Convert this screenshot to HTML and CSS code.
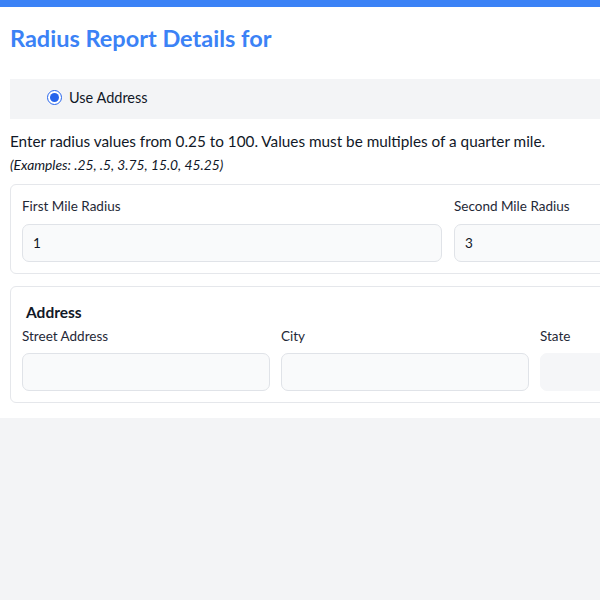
FILE: index.html
```html
<!DOCTYPE html>
<html lang="en">

<head>
    <meta charset="UTF-8">
    <meta name="viewport" content="width=device-width, initial-scale=1.0">
    <title>Radius Report</title>
    <link rel="stylesheet" href="styles.css">
</head>

<body>
    <div class="topbar"></div>
    <div class="page">
        <h1 class="title">Radius Report Details for</h1>

        <!-- 选择方式 -->
        <div class="mode">
            <label class="radio">
                <input type="radio" name="mode" checked>
                <span>Use Address</span>
            </label>
        </div>

        <p class="hint">Enter radius values from 0.25 to 100. Values must be multiples of a quarter mile.</p>
        <p class="examples">(Examples: .25, .5, 3.75, 15.0, 45.25)</p>

        <!-- 半径 -->
        <div class="card radius">
            <div class="field">
                <label>First Mile Radius</label>
                <input type="text" value="1">
            </div>
            <div class="field">
                <label>Second Mile Radius</label>
                <input type="text" value="3">
            </div>
        </div>

        <!-- 地址 -->
        <div class="card address">
            <h2 class="card-title">Address</h2>
            <div class="row">
                <div class="field">
                    <label>Street Address</label>
                    <input type="text">
                </div>
                <div class="field">
                    <label>City</label>
                    <input type="text">
                </div>
                <div class="field">
                    <label>State</label>
                    <input type="text" disabled>
                </div>
            </div>
        </div>
    </div>
</body>

</html>
```

FILE: styles.css
```css
* {
    margin: 0;
    padding: 0;
    box-sizing: border-box;
}

html,
body {
    overflow: hidden;
}

body {
    background-color: #f3f4f6;
    font-family: "Lato", "Noto Sans", sans-serif;
    color: #111827;
    width: 1000px;
}

.topbar {
    height: 7px;
    background-color: #3b82f6;
    box-shadow: 0 1px 2px rgba(0, 0, 0, .15);
}

.page {
    background-color: #fff;
    padding: 0 10px 15px;
}

.title {
    font-size: 23.5px;
    font-weight: 700;
    color: #3b82f6;
    padding-top: 17px;
    line-height: 28px;
}

.mode {
    margin-top: 27px;
    height: 40px;
    background-color: #f3f4f6;
    display: flex;
    align-items: center;
    padding-left: 37px;
}

.radio {
    display: flex;
    align-items: center;
    gap: 7px;
    font-size: 14.5px;
    line-height: 16px;
    margin-top: -3px;
}

.radio input {
    width: 15px;
    height: 15px;
    margin: 0;
    accent-color: #2563eb;
}

.hint {
    font-size: 15.3px;
    line-height: 20px;
    margin-top: 12px;
}

.examples {
    font-size: 13.8px;
    font-style: italic;
    line-height: 17px;
    margin-top: 5px;
}

.card {
    border: 1px solid #e5e7eb;
    border-radius: 6px;
    padding: 12px 11px 11px;
}

.radius {
    margin-top: 11px;
    display: grid;
    grid-template-columns: repeat(2, 420px);
    gap: 12px;
}

.address {
    margin-top: 12px;
    padding-top: 16px;
    padding-bottom: 11px;
}

.card-title {
    font-size: 15.5px;
    font-weight: 700;
    line-height: 18px;
    padding-left: 4px;
}

.address .row {
    display: grid;
    grid-template-columns: repeat(3, 248px);
    gap: 11px;
    margin-top: 6px;
}

.field label {
    display: block;
    font-size: 13.5px;
    line-height: 18px;
    color: #1f2937;
}

.field input {
    display: block;
    width: 100%;
    height: 38px;
    margin-top: 9px;
    border: 1px solid #e0e3e8;
    border-radius: 7px;
    background-color: #f9fafb;
    padding: 0 10px;
    font-family: inherit;
    font-size: 13.5px;
    color: #111827;
    outline: none;
}

.address .field input {
    margin-top: 8px;
}

.field input:disabled {
    border-color: #f5f6f8;
    background-color: #f5f6f8;
}
```
